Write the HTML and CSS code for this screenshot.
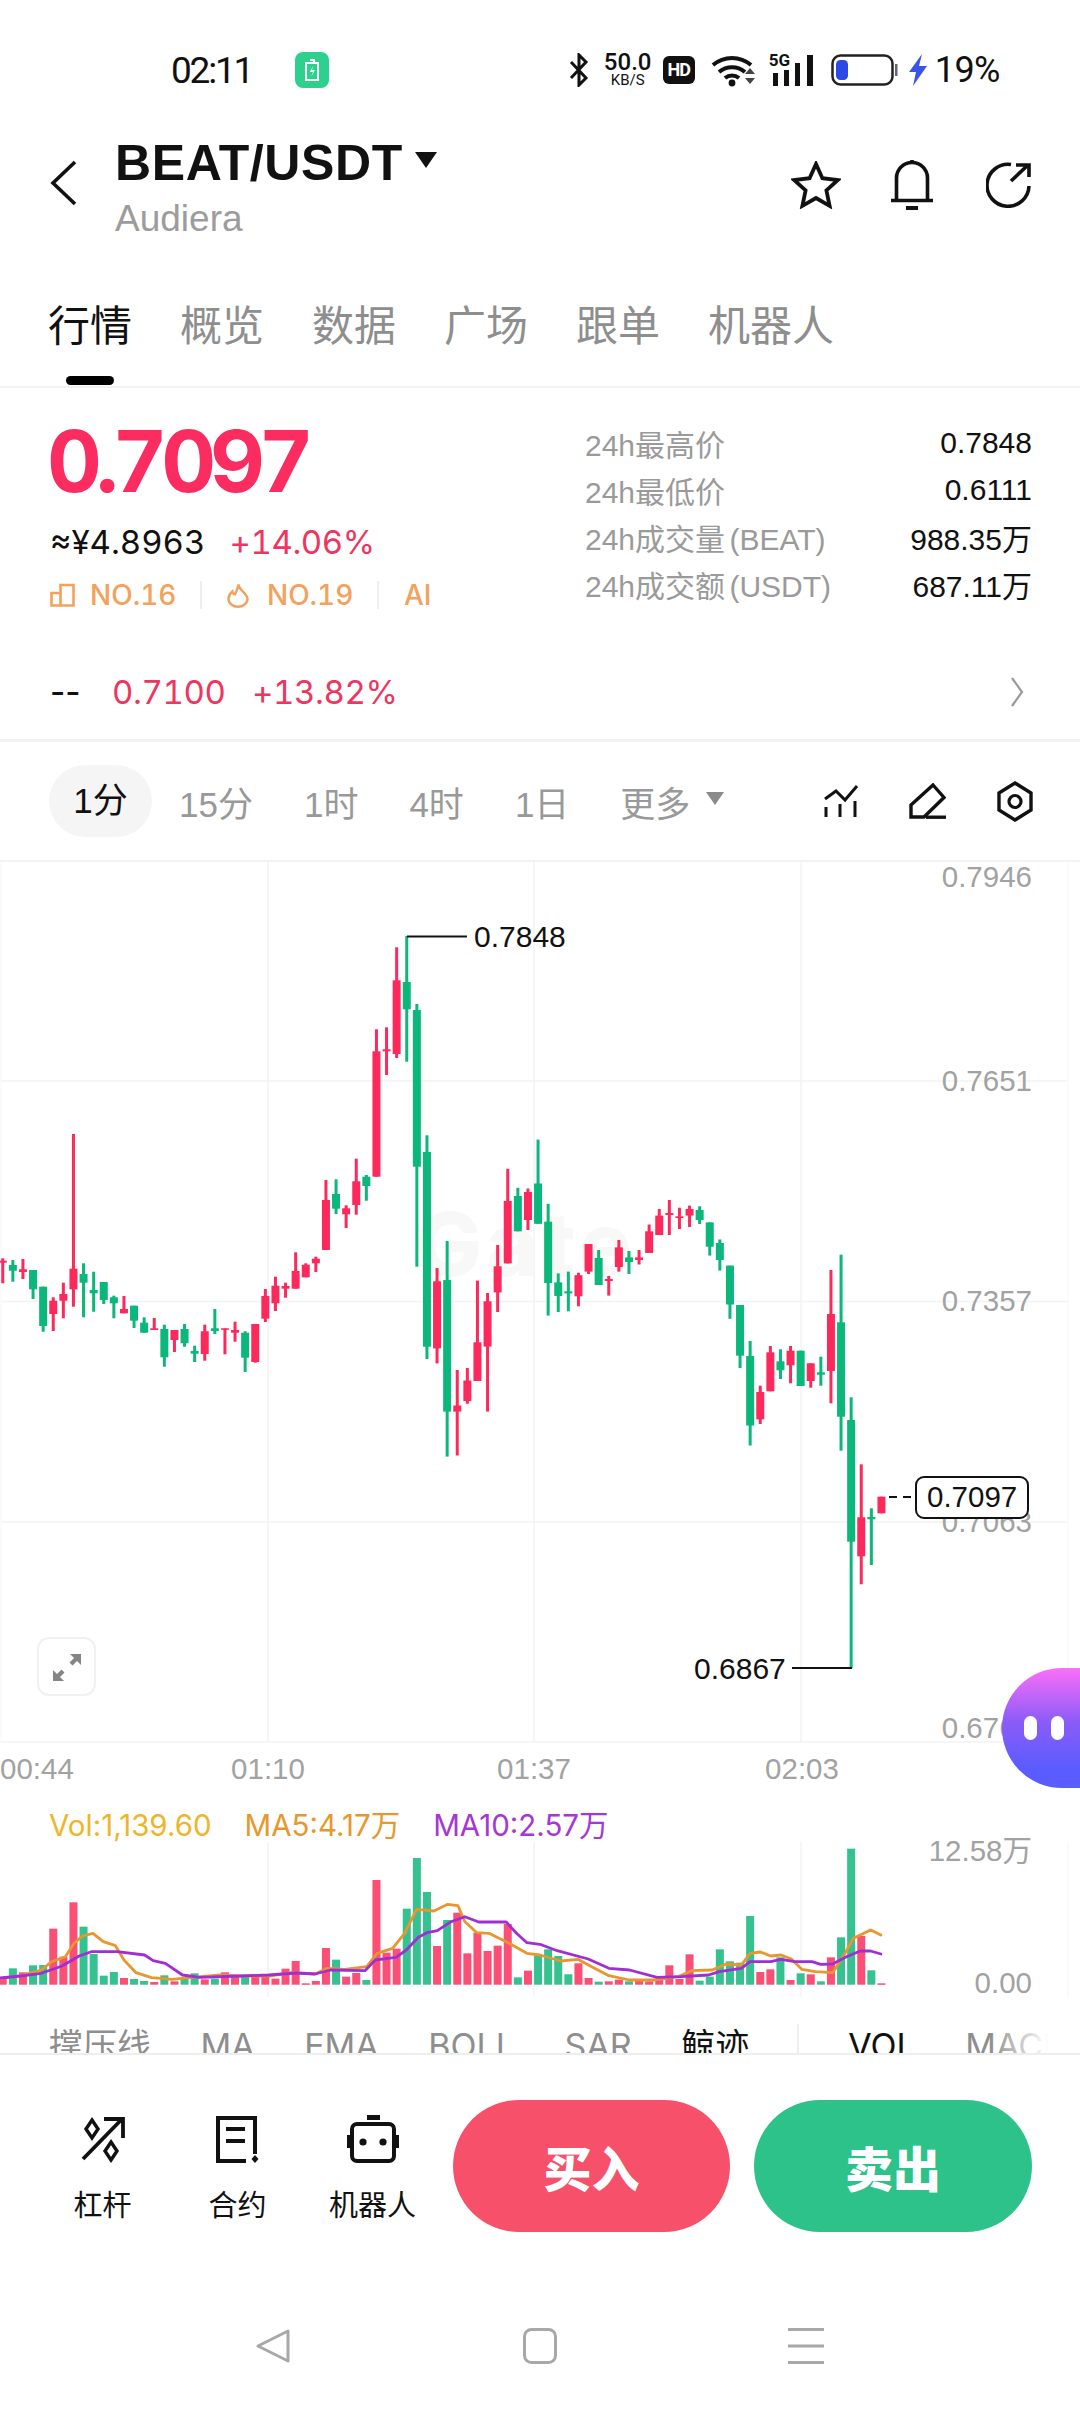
FILE: index.html
```html
<!DOCTYPE html>
<html lang="zh-CN">
<head>
<meta charset="utf-8">
<title>BEAT/USDT</title>
<link rel="stylesheet" href="styles.css">
</head>
<body>
<main class="page">
  <header class="status">
    <div class="status-left">
      <span class="clock">02:11</span>
      <svg class="app-badge" viewBox="0 0 34 36"><rect width="34" height="36" rx="8" fill="#2dd08c"/><path d="M11 11h12v17H11zM15 8h4v3" fill="none" stroke="#fff" stroke-width="2"/><path d="M18 14l-3 6h3l-2 5 4-7h-3z" fill="#fff"/></svg>
    </div>
    <div class="status-right">
      <svg class="bt" viewBox="0 0 20 34"><path d="M2 9l15 16-7 7V2l7 7L2 25" fill="none" stroke="#111" stroke-width="3"/></svg>
      <div class="speed"><b>50.0</b><small>KB/S</small></div>
      <span class="hd">HD</span>
      <svg class="wifi" viewBox="0 0 46 34"><g fill="none" stroke="#111" stroke-width="4"><path d="M2 12a29 29 0 0 1 38 0"/><path d="M8 19a20 20 0 0 1 26 0"/><path d="M14 25a11 11 0 0 1 14 0"/></g><circle cx="21" cy="30" r="3.4" fill="#111"/><path d="M34 21l5-6 5 6zM34 25l5 6 5-6z" fill="#444"/></svg>
      <div class="signal">
        <span class="sig-text">5G</span>
        <svg class="sig-bars" viewBox="0 0 46 34"><g fill="#111"><rect x="4" y="20" width="5" height="13"/><rect x="15" y="17" width="5" height="16"/><rect x="26" y="10" width="5" height="23"/><rect x="38" y="2" width="6" height="31"/></g></svg>
      </div>
      <svg class="battery" viewBox="0 0 67 32"><rect x="1.5" y="1.5" width="60" height="29" rx="8" fill="none" stroke="#222" stroke-width="2.5"/><rect x="5" y="6" width="12" height="20" rx="4.5" fill="#2b49e6"/><rect x="64" y="10" width="2.5" height="12" fill="#666"/></svg>
      <svg class="bolt" viewBox="0 0 20 32"><path d="M14 0L1 18h7L5 32l14-20h-8z" fill="#3a54ea"/></svg>
      <span class="pct">19%</span>
    </div>
  </header>

  <section class="nav">
    <svg class="back" viewBox="0 0 28 46"><path d="M25 2L3 23l22 21" fill="none" stroke="#111" stroke-width="3.6"/></svg>
    <div class="pair">
      <h1 class="pair-name">BEAT/USDT<span class="caret"></span></h1>
      <p class="pair-sub">Audiera</p>
    </div>
    <div class="nav-actions">
      <svg class="icon-star" viewBox="0 0 50 48"><path d="M25 3l6.4 14.2 15.6 1.8-11.6 10.4 3.2 15.4L25 37l-13.6 7.8 3.2-15.4L3 19l15.6-1.8z" fill="none" stroke="#111" stroke-width="3.8"/></svg>
      <svg class="icon-bell" viewBox="0 0 42 50"><path d="M5.5 39V18a15.5 15.5 0 0 1 31 0v21" fill="none" stroke="#111" stroke-width="3.6"/><path d="M0 40.5h42M21 0v4" stroke="#111" stroke-width="3.6"/><rect x="15" y="46" width="12" height="4" fill="#111"/></svg>
      <svg class="icon-share" viewBox="0 0 46 46"><path d="M25 2.5A21 21 0 1 0 43 24M25 19L42 3M30 3h13v12" fill="none" stroke="#111" stroke-width="3.6"/></svg>
    </div>
  </section>

  <nav class="tabs">
    <div class="tab tab-active">行情<i class="tab-bar"></i></div>
    <div class="tab">概览</div>
    <div class="tab">数据</div>
    <div class="tab">广场</div>
    <div class="tab">跟单</div>
    <div class="tab">机器人</div>
  </nav>

  <section class="quote">
    <div class="quote-left">
      <div class="price">0.7097</div>
      <div class="sub-price"><span>≈¥4.8963</span><span class="up">+14.06%</span></div>
      <div class="ranks">
        <svg class="rank-bar" viewBox="0 0 25 24"><path d="M1.5 10h9v12.5h-9zM10.5 2h13v20.5h-13z" fill="none" stroke="#f2a25c" stroke-width="2.6"/></svg>
        <span>NO.16</span><i class="rank-sep"></i>
        <svg class="rank-fire" viewBox="0 0 22 25"><path d="M11.5 1.5c1 6.5 9 9 9 14.5a9.5 7.8 0 0 1-19 0c0-3.4 1.600-5.600 3.800-7.600.2 1.800 1 2.800 2.700 3 1.600-3 2.600-6 3.500-9.900z" fill="none" stroke="#f2a25c" stroke-width="2.4"/></svg>
        <span>NO.19</span><i class="rank-sep"></i>
        <span>AI</span>
      </div>
    </div>
    <dl class="stats">
      <div class="stat"><dt>24h最高价</dt><dd>0.7848</dd></div>
      <div class="stat"><dt>24h最低价</dt><dd>0.6111</dd></div>
      <div class="stat"><dt>24h成交量 (BEAT)</dt><dd>988.35万</dd></div>
      <div class="stat"><dt>24h成交额 (USDT)</dt><dd>687.11万</dd></div>
    </dl>
  </section>

  <section class="ticker">
    <span class="ticker-name">--</span>
    <span class="up ticker-price">0.7100</span>
    <span class="up">+13.82%</span>
    <svg class="ticker-arrow" viewBox="0 0 14 30"><path d="M2 1l10 14L2 29" fill="none" stroke="#9a9a9a" stroke-width="2.2"/></svg>
  </section>

  <section class="frames">
    <span class="frame frame-active">1分</span>
    <span class="frame">15分</span>
    <span class="frame">1时</span>
    <span class="frame">4时</span>
    <span class="frame">1日</span>
    <span class="frame frame-more">更多<i class="more-caret"></i></span>
    <div class="frame-tools">
      <svg class="tool-chart" viewBox="0 0 36 34"><path d="M2 13L13 5l9 9L34 0" transform="translate(0 2)" fill="none" stroke="#111" stroke-width="3"/><path d="M3 23v10M17 20v13M32 17v16" stroke="#111" stroke-width="3"/></svg>
      <svg class="tool-pen" viewBox="0 0 37 36"><path d="M24 2l11 12.500L15 34H2V22z" fill="none" stroke="#111" stroke-width="3.400"/><path d="M17 34.200h20" stroke="#111" stroke-width="3.400"/></svg>
      <svg class="tool-hex" viewBox="0 0 36 41"><path d="M18 2l16 10v17L18 39 2 29V12z" fill="none" stroke="#111" stroke-width="3.4"/><circle cx="18" cy="20.5" r="6" fill="none" stroke="#111" stroke-width="3.2"/></svg>
    </div>
  </section>

  <section class="chart">
    <svg class="chart-svg" viewBox="0 862 1080 930">
      <g class="grid">
        <path d="M0 1081H1068M0 1301.500H1068M0 1522H1068M0 1742H1068"/>
        <path d="M268 862V1742M534 862V1742M801 862V1742"/>
      </g>
      <g class="grid grid-faint"><path d="M1 862V1742M1068 862V1792"/></g>
      <text class="watermark" x="416" y="1276">Gate</text>
      <g id="candles"></g>
      <g class="axis-right">
        <text x="1032" y="887">0.7946</text>
        <text x="1032" y="1091">0.7651</text>
        <text x="1032" y="1311">0.7357</text>
        <text x="1032" y="1532">0.7063</text>
        <text x="1032" y="1738">0.6768</text>
      </g>
      <g class="axis-time">
        <text class="axis-first" x="0" y="1779">00:44</text>
        <text x="268" y="1779">01:10</text>
        <text x="534" y="1779">01:37</text>
        <text x="802" y="1779">02:03</text>
      </g>
      <path class="mark-line" d="M407 936.500H467M792 1668H852"/>
      <text class="mark" x="474" y="947">0.7848</text>
      <text class="mark" x="694" y="1679">0.6867</text>
      <path class="dash-line" d="M889 1497H916"/>
      <rect class="tag" x="916" y="1477" width="112" height="41" rx="8"/>
      <text class="mark mark-tag" x="927" y="1507">0.7097</text>
    </svg>
    <button class="expand" type="button" aria-label="全屏">
      <svg viewBox="0 0 30 30"><path d="M18 2h11v11l-4-4-4.500 4.500-3-3L22 6zM12 29H1V18l4 4 4.500-4.500 3 3L8 25z" fill="#858585"/></svg>
    </button>
    <div class="bubble"><i></i><i></i></div>
  </section>

  <section class="volume">
    <div class="vol-legend">
      <span class="vol-v">Vol:1,139.60</span>
      <span class="vol-m5">MA5:4.17万</span>
      <span class="vol-m10">MA10:2.57万</span>
    </div>
    <svg class="vol-svg" viewBox="0 1842 1080 158">
      <g class="grid"><path d="M268 1842V1997M534 1842V1997M801 1842V1997"/></g>
      <g class="grid grid-faint"><path d="M1068 1842V1997"/></g>
      <g id="bars"></g>
      <polyline id="ma5" class="ma ma-5"/>
      <polyline id="ma10" class="ma ma-10"/>
      <g class="axis-right">
        <text x="1032" y="1861">12.58万</text>
        <text x="1032" y="1993">0.00</text>
      </g>
    </svg>
  </section>

  <div class="indicators">
    <span>撑压线</span><span>MA</span><span>EMA</span><span>BOLL</span><span>SAR</span>
    <span class="ind-on">鲸迹</span><i class="ind-sep"></i>
    <span class="ind-on">VOL</span><span>MACD</span>
    <i class="ind-fade"></i>
  </div>

  <footer class="trade">
    <div class="trade-links">
      <a class="link">
        <svg viewBox="0 0 48 48"><path d="M4 44L43 4M25 4h19v19" fill="none" stroke="#111" stroke-width="3.800"/><path d="M13 5l6 9-6 9-6-9zM32 27l6 9-6 9-6-9z" fill="none" stroke="#111" stroke-width="3.400"/></svg>
        <span>杠杆</span>
      </a>
      <a class="link">
        <svg viewBox="0 0 48 48"><path d="M32 46H4V3h37v36" fill="none" stroke="#111" stroke-width="4"/><path d="M12 14h19M12 26h19" stroke="#111" stroke-width="4"/><path d="M41 40l3.500 4-3.500 4-3.500-4z" fill="#111"/></svg>
        <span>合约</span>
      </a>
      <a class="link">
        <svg class="robot" viewBox="0 0 52 48"><rect x="20" y="0" width="13" height="5" fill="#111"/><rect x="5" y="9" width="42" height="37" rx="5" fill="none" stroke="#111" stroke-width="4"/><path d="M1.500 20v13M50.500 20v13" stroke="#111" stroke-width="3"/><circle cx="16" cy="27" r="3.600" fill="#111"/><circle cx="36" cy="27" r="3.600" fill="#111"/></svg>
        <span>机器人</span>
      </a>
    </div>
    <button class="deal deal-buy" type="button">买入</button>
    <button class="deal deal-sell" type="button">卖出</button>
  </footer>

  <div class="sysnav">
    <svg class="sys-back" viewBox="0 0 36 36"><path d="M33 3v30L3 18z" fill="none" stroke="#a8a8a8" stroke-width="3" stroke-linejoin="round"/></svg>
    <svg class="sys-home" viewBox="0 0 34 36"><rect x="1.500" y="1.500" width="31" height="33" rx="7" fill="none" stroke="#a8a8a8" stroke-width="3"/></svg>
    <svg class="sys-menu" viewBox="0 0 36 36"><path d="M0 1.500h36M0 18h36M0 34.500h36" stroke="#a8a8a8" stroke-width="3"/></svg>
  </div>
</main>
<script src="chart.js"></script>
</body>
</html>
```
FILE: styles.css
```css
* { box-sizing: border-box; margin: 0; padding: 0; }
html, body { background: #fff; }
body { width: 1080px; height: 2412px; overflow: hidden; font-family: Inter, "Noto Sans CJK SC", sans-serif; color: #111; }
.page { width: 1080px; height: 2412px; display: flex; flex-direction: column; overflow: hidden; }
svg { display: block; }

.status { height: 130px; padding: 10px 80px 0 171px; display: flex; align-items: center; justify-content: space-between; font-family: Roboto, sans-serif; }
.status-left { display: flex; align-items: center; gap: 44px; }
.clock { font-size: 37px; letter-spacing: -2.200px; width: 80px; }
.app-badge { width: 34px; height: 36px; }
.status-right { display: flex; align-items: center; }
.bt { width: 20px; height: 34px; margin-right: 12px; }
.speed { width: 54px; display: flex; flex-direction: column; align-items: center; margin-right: 8px; }
.speed b { font-size: 24px; line-height: 20px; font-weight: 500; }
.speed small { font-size: 15px; line-height: 16px; }
.hd { width: 32px; height: 28px; border-radius: 6px; background: #111; color: #fff; font-size: 18px; font-weight: 700; line-height: 28px; text-align: center; margin-right: 16px; letter-spacing: -1px; }
.wifi { width: 46px; height: 34px; margin-right: 12px; }
.signal { position: relative; width: 46px; height: 34px; margin-right: 16px; }
.sig-text { position: absolute; left: 0; top: -3px; font-size: 17px; line-height: 20px; font-weight: 700; }
.sig-bars { width: 46px; height: 34px; }
.battery { width: 67px; height: 32px; margin-right: 10px; }
.bolt { width: 20px; height: 32px; margin-right: 7px; }
.pct { font-size: 36px; letter-spacing: -.500px; }

.nav { height: 120px; padding: 6px 48px 0 50px; display: flex; align-items: flex-start; }
.back { width: 28px; height: 46px; margin-top: 24px; margin-right: 37px; }
.pair { flex: 1; }
.pair-name { font-family: "Liberation Sans", sans-serif; font-size: 50px; font-weight: 700; line-height: 54px; display: flex; align-items: center; letter-spacing: .600px; }
.caret { width: 0; height: 0; margin: -6px 0 0 12px; border: 11px solid transparent; border-top: 16px solid #111; border-bottom: 0; }
.pair-sub { font-family: "Liberation Sans", sans-serif; font-size: 37px; line-height: 58px; color: #9c9c9c; }
.nav-actions { display: flex; align-items: center; margin-top: 24px; }
.icon-star { width: 50px; height: 48px; margin-right: 50px; }
.icon-bell { width: 42px; height: 50px; margin-right: 53px; }
.icon-share { width: 46px; height: 46px; }

.tabs { height: 138px; padding: 47px 0 0 48px; display: flex; align-items: flex-start; gap: 48px; border-bottom: 2px solid #f3f3f3; }
.tab { font-size: 42px; line-height: 52px; color: #8e8e8e; position: relative; font-family: "Noto Sans CJK SC", sans-serif; }
.tab-active { color: #111; display: flex; flex-direction: column; align-items: center; }
.tab-bar { width: 48px; height: 9px; border-radius: 5px; background: #000; margin-top: 27px; }

.quote { height: 272px; padding: 0 48px 0 50px; display: flex; justify-content: space-between; }
.quote-left { padding-top: 24px; font-variant-numeric: tabular-nums; }
.price { font-size: 85px; font-weight: 700; line-height: 100px; color: #fb2c5f; letter-spacing: -6.200px; margin-left: -3px; }
.sub-price { margin-top: 8px; font-size: 33px; line-height: 44px; display: flex; gap: 24px; }
.up { color: #ee3560; font-variant-numeric: tabular-nums; letter-spacing: -.400px; }
.ranks { margin-top: 13px; display: flex; align-items: center; font-size: 28px; line-height: 36px; color: #f2a25c; font-weight: 500; }
.rank-bar { width: 25px; height: 24px; margin-right: 15px; }
.rank-fire { width: 22px; height: 25px; margin-right: 18px; }
.rank-sep { width: 1.500px; height: 28px; background: #eee; margin: 0 25px 0 24px; }
.stats { width: 447px; padding-top: 31px; font-family: "Liberation Sans", "Noto Sans CJK SC", sans-serif; }
.stat { height: 47px; display: flex; justify-content: space-between; align-items: center; font-size: 30px; }
.stat dt { color: #9a9a9a; word-spacing: -4px; }
.stat dd { color: #111; }

.ticker { height: 79px; padding: 0 56px 15px 50px; display: flex; align-items: center; font-size: 33px; }
.ticker-name { width: 62px; font-weight: 500; }
.ticker-price { width: 140px; }
.ticker-arrow { width: 14px; height: 30px; margin-left: auto; }

.frames { height: 123px; padding-left: 49px; border-top: 3px solid #f3f3f3; border-bottom: 2px solid #f3f3f3; display: flex; align-items: center; font-size: 35px; color: #999; font-family: "Liberation Sans", "Noto Sans CJK SC", sans-serif; gap: 51px; }
.frame { white-space: nowrap; }
.frame-active { width: 103px; height: 72px; text-align: center; border-radius: 36px; background: #f5f5f5; color: #111; line-height: 72px; margin-right: -24px; }
.frame-more { display: flex; align-items: center; }
.more-caret { width: 0; height: 0; margin: -6px 0 0 16px; border: 9px solid transparent; border-top: 13px solid #8a8a8a; border-bottom: 0; }
.frame-tools { margin-left: auto; padding-right: 47px; display: flex; align-items: center; }
.tool-chart { width: 36px; height: 34px; margin-right: 50px; }
.tool-pen { width: 37px; height: 36px; margin-right: 51px; }
.tool-hex { width: 36px; height: 41px; }

.chart { position: relative; height: 930px; }
.chart-svg { width: 1080px; height: 930px; }
.grid path { stroke: #f3f3f3; stroke-width: 1.500; fill: none; }
.grid-faint path { stroke: #fafafa; }
.watermark { font-family: Inter, sans-serif; font-size: 88px; font-weight: 800; letter-spacing: 4px; fill: #f8f8f8; }
.axis-right text, .axis-time text { font-family: "Liberation Sans", "Noto Sans CJK SC", sans-serif; font-size: 29.500px; fill: #a2a2a2; }
.axis-right text { text-anchor: end; }
.axis-time text { text-anchor: middle; }
.axis-time .axis-first { text-anchor: start; }
.mark { font-family: "Liberation Sans", sans-serif; font-size: 30px; fill: #111; }
.mark-tag { font-size: 29.500px; }
.mark-line { stroke: #111; stroke-width: 2; fill: none; }
.dash-line { stroke: #111; stroke-width: 2; stroke-dasharray: 8 6; fill: none; }
.tag { fill: #fff; stroke: #111; stroke-width: 2; }
.expand { position: absolute; left: 37px; top: 775px; width: 59px; height: 59px; border: 2px solid #f1f1f1; border-radius: 12px; background: #fff; display: flex; align-items: center; justify-content: center; }
.expand svg { width: 30px; height: 30px; }
.bubble { position: absolute; right: 0; top: 806px; width: 78px; height: 120px; border-radius: 60px 0 0 60px; background: linear-gradient(180deg, #fb6ff8 0%, #8a5cf8 45%, #5a5cff 85%); display: flex; align-items: center; gap: 14px; padding-left: 22px; }
.bubble i { width: 13px; height: 24px; border-radius: 7px; background: #fff; }

.volume { height: 208px; }
.vol-legend { height: 50px; padding: 18px 0 0 49px; display: flex; gap: 33px; font-size: 29.500px; line-height: 30px; font-family: Inter, "Noto Sans CJK SC", sans-serif; }
.vol-v { color: #efb52a; }
.vol-m5 { color: #e6982f; }
.vol-m10 { color: #a636d6; }
.vol-svg { width: 1080px; height: 158px; overflow: visible; }
.ma { fill: none; stroke-width: 2.800; stroke-linejoin: round; stroke-linecap: round; }
.ma-5 { stroke: #e8962e; }
.ma-10 { stroke: #a02ed4; }

.indicators { position: relative; height: 53px; padding: 24px 0 0 49px; display: flex; align-items: flex-start; gap: 49.500px; overflow: hidden; font-size: 34px; line-height: 44px; color: #8e8e8e; white-space: nowrap; }
.ind-on { color: #111; }
.ind-sep { width: 2px; height: 30px; background: #eee; flex: none; margin-left: -2px; }
.ind-fade { position: absolute; right: 0; top: 0; width: 90px; height: 53px; background: linear-gradient(90deg, rgba(255,255,255,0), #fff 65%); }

.trade { height: 177px; border-top: 2px solid #eee; padding: 45px 48px 0 35px; display: flex; align-items: flex-start; }
.trade-links { display: flex; margin-right: 13px; }
.link { width: 135px; padding-top: 15px; display: flex; flex-direction: column; align-items: center; font-size: 29px; line-height: 40px; color: #111; font-family: "Noto Sans CJK SC", sans-serif; }
.link svg { width: 48px; height: 48px; margin-bottom: 20px; }
.link svg.robot { width: 52px; }
.deal { width: 277px; height: 132px; border: 0; border-radius: 66px; color: #fff; font-family: "Noto Sans CJK SC", sans-serif; font-size: 48px; font-weight: 900; }
.deal-buy { background: #f7506a; margin-right: 24px; }
.deal-sell { width: 278px; background: #2ec28b; }

.sysnav { padding: 98px 256px 0 255px; display: flex; justify-content: space-between; align-items: center; }
.sysnav svg { height: 36px; }
.sys-back { width: 36px; }
.sys-home { width: 34px; }
.sys-menu { width: 36px; }
```
FILE: chart.js
```js
// One entry per minute: [colour, high, bodyTop, bodyBottom, low, volumeBarTop]
var NS = "http://www.w3.org/2000/svg";
var R = "#fc2a5c", G = "#0bb77a", VR = "#fb4f76", VG = "#35c190";
var BASE = 1984.7;
var rows = [
["r",1258.3,1260.7,1262.7,1283.3,592],["g",1260,1265,1270.7,1281.7,565],["r",1259,1269.3,1272,1279,577],
["g",1270,1270,1289.3,1299,556],["g",1286.7,1286.7,1326,1331.7,555],["r",1297.3,1300.7,1314,1331,446],
["r",1282.7,1294,1300.7,1318.3,530],["r",1134,1268.7,1289.3,1306.7,367],["g",1263.3,1274,1282.7,1317.3,440],
["g",1271.7,1290,1293.3,1311.7,522],["g",1282,1282,1300,1304,587],["g",1295.7,1297.3,1303.3,1318.3,576],
["r",1296,1309,1313.3,1313.3,594],["g",1305.7,1305.7,1320.7,1328,597],["g",1317.3,1322.7,1332.7,1332.7,603],
["r",1318,1328.3,1330,1330,606],["g",1324.7,1329,1357.3,1366.7,586],["r",1330,1330,1340,1352,604],
["g",1324,1329,1343.3,1346.7,597],["g",1345.7,1351,1353.7,1362,580],["r",1324.7,1331.3,1354,1360.7,598],
["g",1309,1328.3,1331,1334,596],["r",1328.3,1328.3,1329.7,1354.3,577],["r",1321.7,1330,1332.7,1341.7,590],
["g",1331.3,1332.7,1357.7,1372,590],["r",1324,1324,1362,1362.7,586],["r",1289,1296,1318.7,1322,582],
["r",1276.7,1285.7,1303.3,1311,596],["r",1282.7,1286,1288.7,1297.7,566],["r",1252.3,1271,1288.7,1288.7,543],
["r",1263.3,1264.7,1277.3,1277.3,610],["r",1256.7,1258.7,1263.3,1272,603],["r",1180,1200,1250,1250,504],
["g",1179.3,1194,1208.7,1214,539],["r",1205.3,1208.3,1214.3,1228,590],["r",1158.7,1181.3,1205,1214.7,579],
["g",1175,1176.7,1186,1200.7,600],["r",1029.3,1051.3,1176.7,1176.7,300],["r",1027.3,1049.3,1051.3,1075,518],
["r",947.3,980.3,1054,1058,506],["g",936,982,1009.3,1061.7,386],["g",1004,1010,1166.7,1266.7,234],
["g",1135.3,1152,1346.7,1359,336],["r",1268,1281.3,1348.4,1363.4,498],["g",1241,1280,1411.6,1456.6,420],
["r",1370,1405.5,1411.6,1455.5,398],["r",1368,1380.5,1401,1403.7,520],["r",1280.6,1342.3,1381,1381,458],
["r",1293,1301.3,1346.6,1411.6,513],["r",1245,1266.3,1292.4,1312,497],["r",1168.8,1201,1263.4,1263.4,432],
["g",1187.8,1196,1231.3,1231.3,592],["r",1188.5,1192,1220,1230,572],["g",1139.6,1183.5,1223.8,1223.8,528],
["g",1203.8,1221.7,1283,1315.6,508],["g",1273.4,1282.4,1296,1312,528],["g",1271.6,1291.3,1293.4,1311.3,583],
["r",1272.7,1275.2,1296.3,1306.3,550],["r",1244,1244,1271.6,1274,594],["g",1250,1258,1285,1285,605],
["r",1276,1279,1281,1295.6,604],["r",1240,1247.4,1267,1271.6,599],["g",1251,1257.4,1262,1274,604],
["r",1250,1257.4,1260,1264.5,603],["r",1224.5,1231.3,1253,1253,604],["r",1209,1215.6,1235,1235,598],
["r",1200,1213,1215,1235,556],["r",1207.7,1216.3,1218,1229,597],["r",1205.6,1209,1215.6,1227,523],
["g",1206.3,1210,1220,1224,602],["g",1222.4,1222.4,1246.7,1255.6,590],["g",1239.5,1243,1260,1270.6,508],
["g",1265.6,1265.6,1304.5,1318.8,544],["g",1305,1305,1355.6,1368,548],["g",1341,1356,1425.5,1445.5,408],
["r",1385.7,1392,1419.3,1424,576],["r",1346,1352.3,1391.3,1391.3,568],["g",1349.3,1361.3,1370.3,1379,532],
["r",1346,1350.7,1365.3,1383.3,600],["g",1350.7,1350.7,1386,1386,580],["r",1363.3,1363.3,1381,1387.7,583],
["g",1356.7,1372.3,1374.7,1385.7,604],["r",1270,1314,1371,1403.3,532],["g",1254.7,1322.3,1416.7,1450.7,472],
["g",1397.3,1420,1541.7,1668,206],["r",1464.3,1517.3,1556.3,1584.3,468],["g",1508.3,1517,1519.3,1565,571],
["r",1496.7,1496.7,1513.3,1513.3,610]
];

function rect(parent, x, y, w, h, fill) {
  var el = document.createElementNS(NS, "rect");
  el.setAttribute("x", x);
  el.setAttribute("y", y);
  el.setAttribute("width", w);
  el.setAttribute("height", Math.max(h, 1.5));
  el.setAttribute("fill", fill);
  parent.appendChild(el);
}

var candles = document.getElementById("candles");
var bars = document.getElementById("bars");
rows.forEach(function (row, i) {
  var cx = 2.75 + 10.1 * i;
  var up = row[0] === "r";
  var top = 1780 + row[5] / 3;
  rect(candles, cx - 1.5, row[1], 3, row[4] - row[1], up ? R : G);
  rect(candles, cx - 4, row[2], 8, row[3] - row[2], up ? R : G);
  rect(bars, cx - 4, top, 8, BASE - top, up ? VR : VG);
});

// Moving averages, traced as [x, y] pairs on the left and right halves of the pane.
var ma5L = [[0,596],[60,587],[120,570],[150,545],[190,530],[215,490],[240,468],[270,460],[300,485],[335,497],[360,540],[395,578],[440,593],[500,598],[550,593],[640,585],[700,588],[780,588],[850,578],[915,582],[950,565],[1000,568],[1065,560],[1095,520],[1140,505],[1175,460],[1210,388],[1260,393],[1300,373],[1330,377],[1350,425],[1385,458],[1420,460],[1470,485],[1530,520],[1568,525]];
var ma5R = [[60,543],[110,538],[150,560],[200,587],[260,600],[330,600],[400,590],[440,572],[500,570],[540,552],[585,555],[610,520],[640,516],[670,528],[700,525],[730,537],[760,568],[800,575],[850,578],[880,530],[910,475],[960,450],[990,465]];
var ma10L = [[0,594],[60,588],[120,580],[180,558],[230,528],[265,515],[340,515],[420,525],[445,542],[480,550],[530,585],[580,592],[700,588],[780,585],[860,579],[915,582],[960,570],[1060,572],[1090,540],[1150,532],[1180,510],[1215,472],[1240,458],[1270,452],[1310,425],[1350,410],[1390,426],[1470,426],[1500,460],[1530,488],[1568,493]];
var ma10R = [[50,512],[140,537],[200,565],[260,570],[340,592],[410,590],[490,585],[520,575],[585,565],[610,545],[670,545],[700,538],[740,545],[790,545],[815,553],[850,552],[890,530],[930,513],[960,513],[990,522]];

function trace(id, left, right) {
  var pts = left.map(function (p) { return (p[0] / 2.904).toFixed(1) + "," + (1780 + p[1] / 3).toFixed(1); })
    .concat(right.map(function (p) { return (540 + p[0] / 2.904).toFixed(1) + "," + (1780 + p[1] / 3).toFixed(1); }));
  document.getElementById(id).setAttribute("points", pts.join(" "));
}
trace("ma5", ma5L, ma5R);
trace("ma10", ma10L, ma10R);
```
